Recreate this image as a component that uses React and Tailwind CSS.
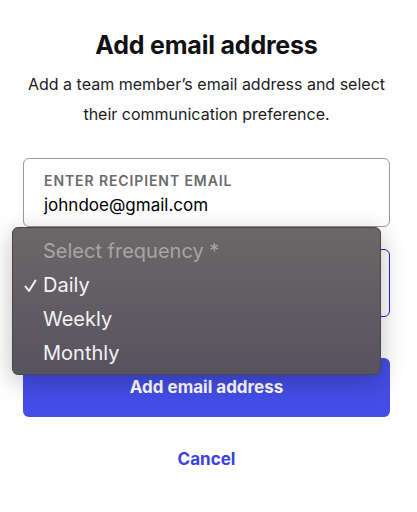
import React from "react"

const font = { fontFamily: "Inter, 'Liberation Sans', sans-serif" }

export default function App() {
  return (
    <div className="w-[417px] h-[512px] bg-white overflow-hidden text-[#111114]" style={font}>
      <div className="w-[367px] ml-[23px] pt-[30px]">
        <h1 className="text-center text-[25px] font-bold leading-[30px] tracking-[-0.2px]">
          Add email address
        </h1>
        <p className="mt-[9px] mx-auto w-[366px] text-center text-[16px] leading-[30px] text-[#1c1c1f]">
          Add a team member’s email address and select their communication preference.
        </p>

        <div className="mt-[29px] h-[69px] rounded-[6px] border border-[#9a9a9a] px-[20px] pt-[12px]">
          <div className="text-[14px] font-semibold tracking-[0.9px] uppercase text-[#6b6b6b] leading-[20px]">
            Enter recipient email
          </div>
          <div className="mt-[2px] text-[17px] leading-[24px] text-black">johndoe@gmail.com</div>
        </div>

        <div className="relative mt-[22px]">
          <div className="h-[68px] rounded-[6px] border border-[#1f1fe8]" />
          <FrequencyMenu />
        </div>

        <button className="mt-[41px] w-full h-[59px] rounded-[6px] bg-[#444de6] text-white text-[17px] font-bold">
          Add email address
        </button>

        <div className="mt-[30px] text-center text-[17px] font-bold text-[#3a42e0]">Cancel</div>
      </div>
    </div>
  )
}

function FrequencyMenu() {
  const options = ["Daily", "Weekly", "Monthly"]
  return (
    <div className="absolute left-[-11px] top-[-22px] w-[369px] h-[148px] rounded-[6px] border border-[#4a4648] bg-gradient-to-b from-[#6c6767] to-[#57535f] shadow-[0_6px_24px_rgba(0,0,0,0.25)] pt-[6px]">
      <div className="pl-[30px] text-[20px] leading-[34px] text-[#a8a4a5]">Select frequency *</div>
      {options.map((o, i) => (
        <div key={o} className="relative pl-[30px] text-[20px] leading-[34px] text-[#f4f2f3]">
          {i === 0 && (
            <svg className="absolute left-[11px] top-[11px]" width="13" height="14" viewBox="0 0 13 14" fill="none">
              <path d="M1.5 7.5 L5 12 L11.5 1.5" stroke="#f4f2f3" strokeWidth="2" strokeLinecap="round" strokeLinejoin="round" />
            </svg>
          )}
          {o}
        </div>
      ))}
    </div>
  )
}
